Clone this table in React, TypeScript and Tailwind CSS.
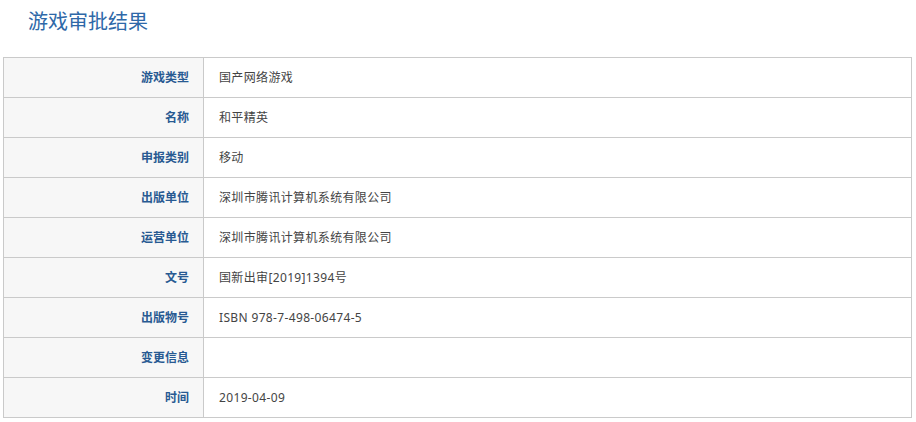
import React from "react";

const rows: [string, string][] = [
  ["游戏类型", "国产网络游戏"],
  ["名称", "和平精英"],
  ["申报类别", "移动"],
  ["出版单位", "深圳市腾讯计算机系统有限公司"],
  ["运营单位", "深圳市腾讯计算机系统有限公司"],
  ["文号", "国新出审[2019]1394号"],
  ["出版物号", "ISBN 978-7-498-06474-5"],
  ["变更信息", ""],
  ["时间", "2019-04-09"],
];

export default function App() {
  return (
    <div
      className="w-[916px] h-[422px] bg-white overflow-hidden"
      style={{ fontFamily: '"Noto Sans", "Noto Sans CJK SC", sans-serif' }}
    >
      <div className="h-[57px] pl-[28px] pt-[8px]">
        <h1 className="text-[20px] leading-[28px] text-[#2e68a8] font-normal">游戏审批结果</h1>
      </div>
      <div className="ml-[3px] w-[909px] border-l border-r border-t border-[#cacaca]">
        {rows.map(([k, v]) => (
          <div key={k} className="flex h-[40px] border-b border-[#cacaca]">
            <div className="w-[200px] border-r border-[#cacaca] bg-[#f7f7f7] flex items-center justify-end pr-[14px] text-[12px] font-bold text-[#285a92]">
              {k}
            </div>
            <div className="flex-1 flex items-center pl-[15px] text-[12px] tracking-[0.35px] text-[#444]">{v}</div>
          </div>
        ))}
      </div>
    </div>
  );
}
